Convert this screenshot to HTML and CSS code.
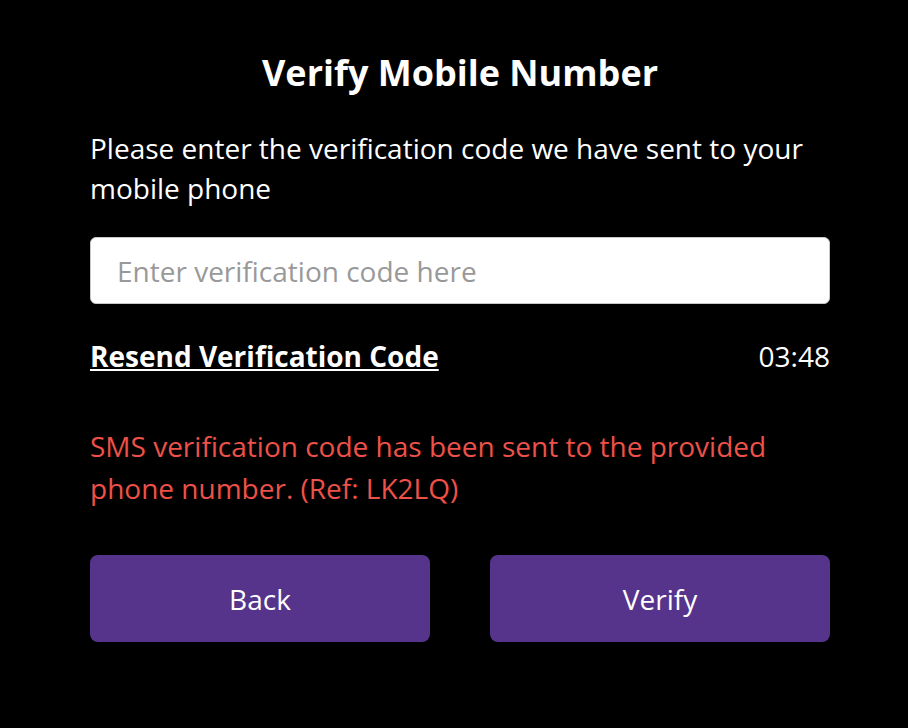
FILE: index.html
```html
<!DOCTYPE html>
<html>
<head>
<meta charset="utf-8">
<link rel="stylesheet" href="styles.css">
</head>
<body>
<main class="card">
  <h1 class="title">Verify Mobile Number</h1>
  <p class="intro">Please enter the verification code we have sent to your mobile phone</p>
  <input class="code-input" type="text" placeholder="Enter verification code here">
  <div class="resend-row">
    <a class="resend" href="#">Resend Verification Code</a>
    <span class="timer">03:48</span>
  </div>
  <p class="notice">SMS verification code has been sent to the provided phone number. (Ref: LK2LQ)</p>
  <div class="actions">
    <button class="btn">Back</button>
    <button class="btn">Verify</button>
  </div>
</main>
</body>
</html>
```
FILE: styles.css
```css
html, body {
  margin: 0;
  padding: 0;
  background: #000;
}
body {
  font-family: "Open Sans", "Noto Sans", sans-serif;
  color: #fff;
}
.card {
  width: 740px;
  margin: 0 0 0 90px;
  padding-top: 50px;
  display: flex;
  flex-direction: column;
}
.title {
  margin: 0;
  text-align: center;
  font-size: 36px;
  font-weight: 700;
  line-height: 46px;
}
.intro {
  margin: 32px 0 0;
  font-size: 28px;
  line-height: 40px;
}
.code-input {
  margin-top: 29px;
  height: 67px;
  box-sizing: border-box;
  border: 1px solid #c8c8c8;
  border-radius: 6px;
  padding: 0 26px;
  font-family: inherit;
  font-size: 28px;
  color: #333;
  background: #fff;
  outline: none;
  box-shadow: 0 1px 2px rgba(0,0,0,0.2);
}
.code-input::placeholder {
  color: #999;
}
.resend-row {
  margin-top: 32px;
  display: flex;
  justify-content: space-between;
  align-items: center;
  font-size: 28px;
  line-height: 40px;
}
.resend {
  color: #fff;
  font-weight: 700;
  text-decoration: underline;
}
.timer {
  color: #fff;
}
.notice {
  margin: 49px 0 0;
  color: #ee5147;
  font-size: 28px;
  line-height: 42px;
}
.actions {
  margin-top: 46px;
  display: grid;
  grid-template-columns: 1fr 1fr;
  gap: 60px;
}
.btn {
  height: 87px;
  border: none;
  border-radius: 8px;
  background: #56348b;
  color: #fff;
  font-family: inherit;
  font-size: 28px;
}
```
